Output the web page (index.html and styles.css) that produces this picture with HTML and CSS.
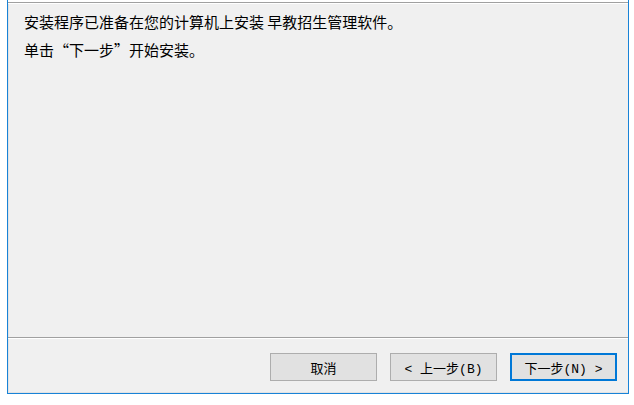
FILE: index.html
```html
<!DOCTYPE html>
<html lang="zh">
<head>
<meta charset="utf-8">
<link rel="stylesheet" href="styles.css">
</head>
<body>
<div class="window">
  <div class="header-edge"></div>
  <div class="rule"></div>
  <div class="main">
    <p class="line">安装程序已准备在您的计算机上安装 早教招生管理软件。</p>
    <p class="line">单击“下一步”开始安装。</p>
  </div>
  <div class="rule"></div>
  <div class="footer">
    <button class="btn">取消</button>
    <button class="btn">&lt; 上一步(B)</button>
    <button class="btn btn-default">下一步(N) &gt;</button>
  </div>
</div>
</body>
</html>
```

FILE: styles.css
```css
html, body {
  margin: 0;
  padding: 0;
  background: #ffffff;
}

.window {
  margin-left: 7px;
  width: 622px;
  height: 394px;
  box-sizing: border-box;
  border-left: 1px solid #1883d7;
  border-right: 1px solid #1883d7;
  border-bottom: 1px solid #1883d7;
  background: #f0f0f0;
  display: flex;
  flex-direction: column;
  font-family: "Noto Sans CJK SC", "Microsoft YaHei", sans-serif;
  color: #000;
}

.header-edge {
  height: 2px;
  background: #ffffff;
}

.rule {
  height: 1px;
  border-top: 1px solid #a0a0a0;
  background: #ffffff;
}

.main {
  flex: 1;
  padding: 4px 14px 0 15px;
  border-left: 1px solid #e3e3e3;
}

.line {
  margin: 0;
  font-size: 15px;
  line-height: 28px;
  white-space: nowrap;
}

.footer {
  height: 54px;
  box-sizing: border-box;
  padding: 14px 11px 0 0;
  display: flex;
  justify-content: flex-end;
  align-items: flex-start;
  gap: 13px;
  border-left: 1px solid #e3e3e3;
  border-bottom: 1px solid #e3e3e3;
}

.btn {
  width: 107px;
  height: 28px;
  box-sizing: border-box;
  margin: 0;
  padding: 0;
  background: #e1e1e1;
  border: 1px solid #adadad;
  font-family: "Liberation Mono", "Noto Sans CJK SC", monospace;
  font-size: 13px;
  color: #000;
}

.btn-default {
  border: 2px solid #0078d7;
}
```
